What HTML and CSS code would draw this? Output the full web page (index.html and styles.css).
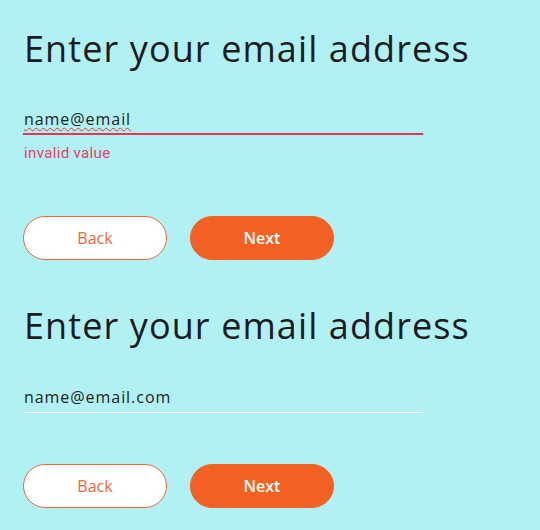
FILE: index.html
```html
<!DOCTYPE html>
<html lang="en">
<head>
<meta charset="utf-8">
<title>Email step</title>
<link rel="stylesheet" href="styles.css">
</head>
<body>
<main class="page">
  <section class="step">
    <h1 class="title">Enter your email address</h1>
    <div class="field field--error">
      <div class="field__value"><span class="misspelled">name@email</span></div>
    </div>
    <div class="field__error">invalid value</div>
    <div class="actions">
      <button class="btn btn--outline" type="button">Back</button>
      <button class="btn btn--solid" type="button">Next</button>
    </div>
  </section>
  <section class="step step--second">
    <h1 class="title">Enter your email address</h1>
    <div class="field field--valid">
      <div class="field__value">name@email.com</div>
    </div>
    <div class="actions actions--second">
      <button class="btn btn--outline" type="button">Back</button>
      <button class="btn btn--solid" type="button">Next</button>
    </div>
  </section>
</main>
</body>
</html>
```
FILE: styles.css
```css
html, body {
  margin: 0;
  padding: 0;
}
body {
  background: #b2f1f3;
  font-family: "Open Sans", "Liberation Sans", sans-serif;
  color: #1a1a1a;
}
.page {
  padding: 27px 24px 0 23px;
  display: flex;
  flex-direction: column;
}
.step {
  display: flex;
  flex-direction: column;
}
.step--second {
  margin-top: 44px;
}
.title {
  margin: 0 0 0 1px;
  font-size: 36px;
  line-height: 44px;
  font-weight: 400;
  letter-spacing: 1.1px;
  color: #1b1b22;
}
.field {
  width: 400px;
  margin-top: 37px;
  border-bottom: 1px solid #ffffff;
  padding-bottom: 3px;
}
.field--error {
  border-bottom: 2px solid #e8325a;
}
.field--valid {
  margin-top: 38px;
  padding-bottom: 4px;
}
.field__value {
  padding-left: 1px;
  font-size: 16px;
  line-height: 22px;
  color: #1e1e1e;
  letter-spacing: 0.95px;
}
.misspelled {
  text-decoration: underline wavy #e5303a;
  text-decoration-thickness: 1px;
  text-underline-offset: 2px;
}
.field__error {
  margin-top: 9px;
  padding-left: 1px;
  font-family: Roboto, "Liberation Sans", sans-serif;
  font-size: 15px;
  line-height: 18px;
  letter-spacing: 0.35px;
  color: #ea3d6a;
}
.actions {
  display: flex;
  gap: 23px;
  margin-top: 54px;
}
.actions--second {
  margin-top: 51px;
}
.btn {
  width: 144px;
  height: 44px;
  border-radius: 22px;
  font-family: "Open Sans", "Liberation Sans", sans-serif;
  font-size: 16px;
  box-sizing: border-box;
  cursor: pointer;
  padding: 0;
}
.btn--outline {
  background: #ffffff;
  border: 1px solid #f0663a;
  color: #f0663a;
  font-weight: 400;
}
.btn--solid {
  background: #f36024;
  border: 1px solid #f36024;
  color: #ffffff;
  font-weight: 600;
}
```
